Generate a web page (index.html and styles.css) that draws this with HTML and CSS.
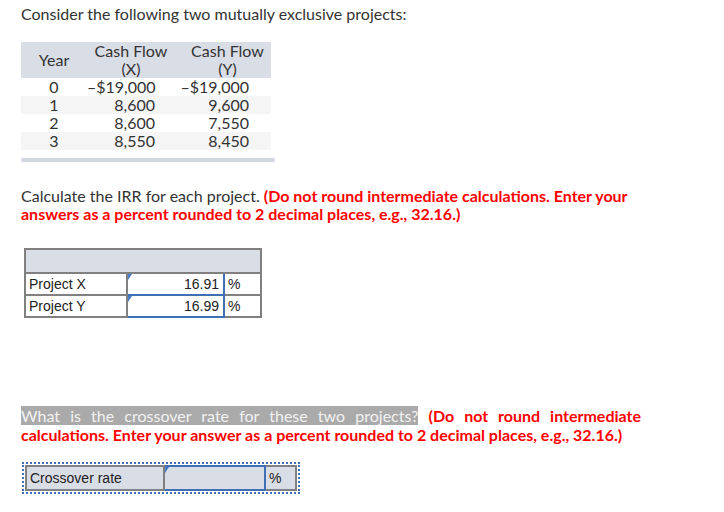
FILE: index.html
```html
<!DOCTYPE html>
<html>
<head>
<meta charset="utf-8">
<link rel="stylesheet" href="styles.css">
</head>
<body>
<div class="page">
  <p class="title">Consider the following two mutually exclusive projects:</p>

  <table class="cf">
    <thead>
      <tr>
        <th class="c-year">Year</th>
        <th class="c-x">Cash Flow<br>(X)</th>
        <th class="c-y">Cash Flow<br>(Y)</th>
      </tr>
    </thead>
    <tbody>
      <tr><td class="c-year">0</td><td class="c-x">&ndash;$19,000</td><td class="c-y">&ndash;$19,000</td></tr>
      <tr class="alt"><td class="c-year">1</td><td class="c-x">8,600</td><td class="c-y">9,600</td></tr>
      <tr><td class="c-year">2</td><td class="c-x">8,600</td><td class="c-y">7,550</td></tr>
      <tr class="alt"><td class="c-year">3</td><td class="c-x">8,550</td><td class="c-y">8,450</td></tr>
    </tbody>
  </table>
  <div class="scrollbar"></div>

  <p class="q">Calculate the IRR for each project. <b class="red">(Do not round intermediate calculations. Enter your answers as a percent rounded to 2 decimal places, e.g., 32.16.)</b></p>

  <table class="ans">
    <tr class="ans-head"><td colspan="3"></td></tr>
    <tr>
      <td class="lbl">Project X</td>
      <td class="inp"><span class="flag"></span>16.91</td>
      <td class="pct">%</td>
    </tr>
    <tr>
      <td class="lbl">Project Y</td>
      <td class="inp"><span class="flag"></span>16.99</td>
      <td class="pct">%</td>
    </tr>
  </table>

  <p class="q q2"><span class="sel">What is the crossover rate for these two projects?</span> <b class="red">(Do not round intermediate calculations. Enter your answer as a percent rounded to 2 decimal places, e.g., 32.16.)</b></p>

  <div class="cross">
    <table class="ans ans-cross">
      <tr>
        <td class="lbl">Crossover rate</td>
        <td class="inp"><span class="flag"></span></td>
        <td class="pct">%</td>
      </tr>
    </table>
  </div>
</div>
</body>
</html>
```

FILE: styles.css
```css
html, body {
  margin: 0;
  padding: 0;
  background: #fff;
}

.page {
  padding: 5px 0 0 21px;
  font-family: "Lato", "Open Sans", sans-serif;
  font-size: 16px;
  color: #333;
}

.title {
  margin: 0;
  line-height: 18px;
}

.cf {
  margin-top: 19px;
  border-collapse: collapse;
  table-layout: fixed;
  width: 250px;
  line-height: 18px;
}

.cf th,
.cf td {
  box-sizing: border-box;
  padding: 0;
  white-space: nowrap;
}

.cf th {
  background: #d9dde6;
  font-weight: normal;
  text-align: center;
  vertical-align: middle;
}

.cf td {
  height: 18px;
}

.cf .c-year { width: 66px; text-align: center; }
.cf .c-x { width: 88px; }
.cf .c-y { width: 96px; }

.cf th.c-y { padding-left: 9px; }

.cf td.c-x { text-align: right; padding-right: 20px; }
.cf td.c-y { text-align: right; padding-right: 22px; }

.cf tr.alt td { background: #f5f5f5; }

.scrollbar {
  margin-top: 8px;
  width: 254px;
  height: 4px;
  border-radius: 2px;
  background: #d2d6df;
}

.q {
  margin: 25px 0 0 0;
  width: 620px;
  line-height: 18px;
}

.red {
  color: #f00;
  font-weight: bold;
}

.ans {
  margin: 25px 0 0 3px;
  border-collapse: collapse;
  font-family: "Liberation Sans", Arial, sans-serif;
  font-size: 14px;
  color: #222;
}

.ans td {
  border: 2px solid #808080;
  padding: 0 3px;
  height: 20px;
}

.ans-head td {
  background: #d9dde6;
  height: 22px;
}

.ans .lbl { width: 94px; }

.ans .inp {
  position: relative;
  width: 88px;
  text-align: right;
  border: 2px solid #3f6fb5;
  padding-right: 4px;
}

.ans .pct { width: 29px; }

.flag {
  position: absolute;
  left: 0;
  top: 0;
  width: 0;
  height: 0;
  border-top: 6px solid #4a7cc9;
  border-right: 4px solid transparent;
}

.q2 {
  margin-top: 88px;
  line-height: 19px;
  text-align: justify;
}

.sel {
  background: #aaa;
  color: #f2f2f2;
}

.cross {
  display: inline-block;
  margin: 18px 0 0 1px;
  border: 2px dotted #3f6fb5;
  padding: 1px;
}

.ans-cross {
  margin: 0;
  background: #d9dde6;
}

.ans-cross td { height: 22px; }
.ans-cross .lbl { width: 130px; }
.ans-cross .inp { width: 92px; }
.ans-cross .pct { width: 23px; }
```
